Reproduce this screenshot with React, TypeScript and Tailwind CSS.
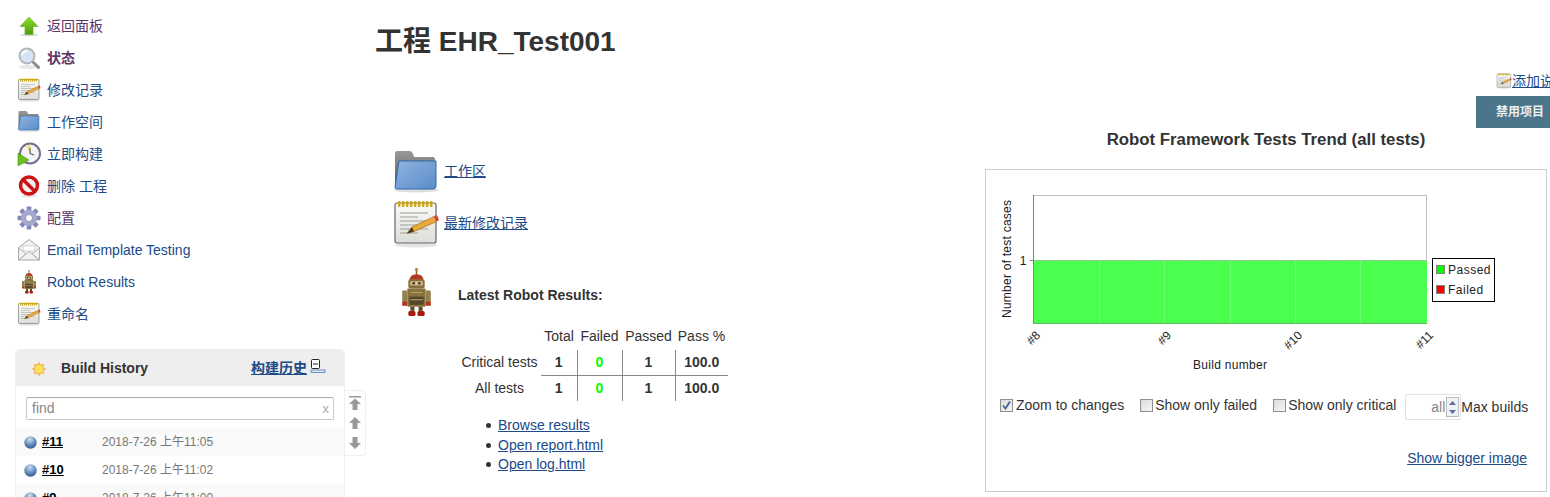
import { ReactNode } from "react";

const Arrow = () => (
  <svg width="24" height="24" viewBox="0 0 24 24">
    <defs>
      <linearGradient id="up" x1="0" y1="0" x2="0" y2="1">
        <stop offset="0" stopColor="#8ae234" />
        <stop offset="1" stopColor="#4e9a06" />
      </linearGradient>
    </defs>
    <ellipse cx="12" cy="21" rx="9" ry="1.500" fill="#ddd" />
    <path d="M12 3 L21 12.500 H16 V20.500 H8 V12.500 H3 Z" fill="url(#up)" stroke="#6aa81e" strokeWidth="0.600" />
  </svg>
);

const Magnifier = () => (
  <svg width="24" height="24" viewBox="0 0 24 24">
    <ellipse cx="11" cy="21" rx="9" ry="2" fill="#e8e8e8" />
    <path d="M15 15 L21.500 21.500" stroke="#8a8a8a" strokeWidth="3" strokeLinecap="round" />
    <circle cx="10" cy="10" r="7.500" fill="#d5e4f5" stroke="#b4b7b9" strokeWidth="2" />
    <path d="M5 9 A5 5 0 0 1 10 5" stroke="#fff" strokeWidth="2" fill="none" />
  </svg>
);

const Notepad = ({ size = 24 }: { size?: number }) => (
  <svg width={size} height={size} viewBox="0 0 48 48">
    <defs>
      <linearGradient id="paper" x1="0" y1="0" x2="0" y2="1">
        <stop offset="0" stopColor="#fbfbf8" />
        <stop offset="1" stopColor="#dcdcd8" />
      </linearGradient>
    </defs>
    <ellipse cx="24" cy="45" rx="21" ry="2.500" fill="#e4e4e4" />
    <rect x="3" y="3" width="41" height="40" rx="2" fill="url(#paper)" stroke="#666" strokeWidth="1.200" />
    {[6, 10, 14, 18, 22, 26, 30, 34, 38].map((x) => (
      <rect key={x} x={x} y="1" width="2.500" height="6" rx="1" fill="#c9a614" />
    ))}
    {[13, 17, 21, 25, 29, 33].map((y, i) => (
      <path key={y} d={`M8 ${y} H${i % 2 ? 26 : 36}`} stroke="#a5a5a5" strokeWidth="1.100" />
    ))}
    <path d="M15 33.500 L20 27 L42 16.500 L44.500 21.500 L22 31.500 Z" fill="#e9a93c" stroke="#a86f10" strokeWidth="0.700" />
    <path d="M42 16.500 L44.500 21.500 L47 20 L45 15 Z" fill="#d8403c" />
    <path d="M15 33.500 L20 27 L22 31.500 Z" fill="#4a3a22" />
  </svg>
);

const Folder = ({ size = 24 }: { size?: number }) => (
  <svg width={size} height={size} viewBox="0 0 48 48">
    <defs>
      <linearGradient id="fold" x1="0" y1="0" x2="1" y2="1">
        <stop offset="0" stopColor="#8fb4e0" />
        <stop offset="1" stopColor="#5a8cc9" />
      </linearGradient>
      <linearGradient id="back" x1="0" y1="0" x2="0" y2="1">
        <stop offset="0" stopColor="#9a9a9a" />
        <stop offset="1" stopColor="#555" />
      </linearGradient>
    </defs>
    <ellipse cx="24" cy="41" rx="22" ry="2.500" fill="#ddd" />
    <path d="M3 38 V4 Q3 2 5 2 H18 Q20 2 21 5 L22 8 H41 Q43 8 43 10 V38 Z" fill="url(#back)" />
    <path d="M7 12 H44 V37 Q44 40 41 40 H5 Q3 40 3 38 Z" fill="url(#fold)" stroke="#2f69ad" strokeWidth="1" />
  </svg>
);

const Clock = () => (
  <svg width="24" height="24" viewBox="0 0 24 24">
    <circle cx="13" cy="11.500" r="10" fill="#f4f3f6" stroke="#77708f" strokeWidth="2" />
    <path d="M13 11.500 L9 4 A8 8 0 0 1 14 3.500 Z" fill="#efe38c" />
    <path d="M13 11.500 L13 6 M13 11.500 L17 13" stroke="#444" strokeWidth="1" />
    <path d="M1 11 L12 18 L1 24 Z" fill="#6cc01c" stroke="#3c8c0c" strokeWidth="0.500" />
  </svg>
);

const NoEntry = () => (
  <svg width="24" height="24" viewBox="0 0 24 24">
    <ellipse cx="12" cy="22" rx="8" ry="1.500" fill="#e2e2e2" />
    <circle cx="12" cy="11.500" r="8.500" fill="#f4f0f0" stroke="#cc1414" strokeWidth="3.500" />
    <path d="M5.500 5 L18.500 18" stroke="#cc1414" strokeWidth="3.500" />
  </svg>
);

const Gear = () => (
  <svg width="24" height="24" viewBox="0 0 24 24">
    {[0, 45, 90, 135, 180, 225, 270, 315].map((a) => (
      <rect key={a} x="9.700" y="0.500" width="4.600" height="6" rx="0.800" fill="#8488b8" transform={`rotate(${a} 12 12)`} />
    ))}
    <circle cx="12" cy="12" r="8" fill="#a5a9cc" />
    <circle cx="12" cy="12" r="3.500" fill="#fff" stroke="#6d7099" strokeWidth="0.600" />
  </svg>
);

const Mail = () => (
  <svg width="24" height="24" viewBox="0 0 24 24">
    <path d="M1.500 9.500 L12 1.500 L22.500 9.500 V22 H1.500 Z" fill="#f2f2f0" stroke="#a7a7a3" strokeWidth="1" />
    <path d="M5.500 8 H18.500 L17 13 H7 Z" fill="#fff" stroke="#bbb" strokeWidth="0.600" />
    <path d="M1.500 10 L9 16 L1.500 22 M22.500 10 L15 16 L22.500 22 M2 22 L12 13.500 L22 22" fill="none" stroke="#b5b5b1" strokeWidth="1" />
  </svg>
);

const Robot = ({ w = 24, h = 24 }: { w?: number; h?: number }) => (
  <svg width={w} height={h} viewBox="0 0 30 48">
    <path d="M15 0 V7" stroke="#8a6a2f" strokeWidth="1.500" />
    <circle cx="15" cy="1.500" r="1.500" fill="#b08a3a" />
    <path d="M8 13 Q8 6 15 6 Q22 6 22 13 Z" fill="#b5391b" />
    <rect x="7" y="11" width="16" height="9" rx="2" fill="#8a6f3c" />
    <rect x="9" y="13" width="12" height="4" fill="#cfc39a" />
    <rect x="11" y="14" width="2.500" height="2" fill="#3a2c14" />
    <rect x="16.500" y="14" width="2.500" height="2" fill="#3a2c14" />
    <rect x="6" y="20" width="18" height="18" rx="1" fill="#86733f" />
    <rect x="8" y="28" width="14" height="8" fill="#54482a" />
    <path d="M9 24 H21 M9 31 H21" stroke="#b8a66c" strokeWidth="1" />
    <rect x="1" y="22" width="5" height="12" rx="1" fill="#94804c" />
    <rect x="24" y="22" width="5" height="12" rx="1" fill="#94804c" />
    <rect x="1" y="33" width="5" height="4" fill="#b5341c" />
    <rect x="24" y="33" width="5" height="4" fill="#b5341c" />
    <rect x="9" y="38" width="4" height="4" fill="#5a4a28" />
    <rect x="17" y="38" width="4" height="4" fill="#5a4a28" />
    <rect x="7" y="42" width="7" height="5" rx="1.500" fill="#a81c10" />
    <rect x="16" y="42" width="7" height="5" rx="1.500" fill="#a81c10" />
  </svg>
);

const Sun = () => (
  <svg width="16" height="16" viewBox="0 0 16 16">
    {[0, 45, 90, 135, 180, 225, 270, 315].map((a) => (
      <path key={a} d="M8 0.500 L10 4 H6 Z" fill="#f3b765" transform={`rotate(${a} 8 8)`} />
    ))}
    <circle cx="8" cy="8" r="4.500" fill="#fbe35c" stroke="#f1b04a" strokeWidth="0.800" />
  </svg>
);

const Ball = () => (
  <svg width="13" height="13" viewBox="0 0 13 13" className="shrink-0">
    <defs>
      <radialGradient id="ball" cx="0.450" cy="0.250" r="0.800">
        <stop offset="0" stopColor="#cfdff0" />
        <stop offset="0.500" stopColor="#6d94c4" />
        <stop offset="1" stopColor="#28508c" />
      </radialGradient>
    </defs>
    <circle cx="6.500" cy="6.500" r="6.200" fill="url(#ball)" />
  </svg>
);

const tasks: { icon: ReactNode; label: string; cls: string }[] = [
  { icon: <Arrow />, label: "返回面板", cls: "text-[#5c3566]" },
  { icon: <Magnifier />, label: "状态", cls: "text-[#5c3566] font-bold" },
  { icon: <Notepad />, label: "修改记录", cls: "" },
  { icon: <Folder />, label: "工作空间", cls: "" },
  { icon: <Clock />, label: "立即构建", cls: "" },
  { icon: <NoEntry />, label: "删除 工程", cls: "" },
  { icon: <Gear />, label: "配置", cls: "text-[#5c3566]" },
  { icon: <Mail />, label: "Email Template Testing", cls: "" },
  { icon: <Robot />, label: "Robot Results", cls: "" },
  { icon: <Notepad />, label: "重命名", cls: "" },
];

const builds = [
  { id: "#11", time: "2018-7-26 上午11:05", bg: "bg-[#fafafa]" },
  { id: "#10", time: "2018-7-26 上午11:02", bg: "bg-white" },
  { id: "#9", time: "2018-7-26 上午11:00", bg: "bg-[#fafafa]" },
];

const links = ["Browse results", "Open report.html", "Open log.html"];

const Check = ({ on = false }: { on?: boolean }) => (
  <span className="flex h-[13px] w-[13px] shrink-0 items-center justify-center border border-[#8e8f8f] bg-gradient-to-br from-[#dcdcdc] to-[#f6f6f6]">
    {on && (
      <svg width="11" height="11" viewBox="0 0 11 11">
        <path d="M2 5.500 L4.500 8.500 L9 1.500" fill="none" stroke="#4a5f97" strokeWidth="1.800" />
      </svg>
    )}
  </span>
);

const Chart = () => (
  <svg width="560" height="215" viewBox="986 170 560 215" className="block font-['Liberation_Sans',sans-serif]">
    <rect x="1033.500" y="195.500" width="393" height="128" fill="#fff" stroke="#c0c0c0" />
    <rect x="1033" y="260" width="394" height="63.500" fill="#4bff4f" />
    <path d="M1033 260.500 H1427" stroke="#b8b8b8" strokeDasharray="2 1" />
    {[1099, 1164, 1230, 1295, 1360].map((x) => (
      <path key={x} d={`M${x}.5 261 V323`} stroke="#6cff70" />
    ))}
    <path d="M1033.500 195 V324" stroke="#808080" />
    <path d="M1033 323.500 H1427" stroke="#5cb85c" />
    <path d="M1030 260.500 H1033" stroke="#808080" />
    <text x="1023" y="265" fontSize="12" fill="#222" textAnchor="middle">1</text>
    <text transform="translate(1011 318) rotate(-90)" fontSize="12" fill="#222" textLength="118">Number of test cases</text>
    {[
      { x: 1041, t: "#8" },
      { x: 1172, t: "#9" },
      { x: 1303, t: "#10" },
      { x: 1434, t: "#11" },
    ].map((l) => (
      <text key={l.t} transform={`translate(${l.x} 336) rotate(-45)`} fontSize="12" fill="#222" textAnchor="end">
        {l.t}
      </text>
    ))}
    <text x="1193" y="369" fontSize="12" fill="#222" textLength="74">Build number</text>
    <rect x="1432.500" y="258.500" width="62" height="43" fill="#fff" stroke="#000" />
    <rect x="1436.500" y="265.500" width="8" height="8" fill="#00ff00" stroke="#808080" />
    <rect x="1436.500" y="285.500" width="8" height="8" fill="#ff0000" stroke="#808080" />
    <text x="1448" y="274" fontSize="12" fill="#222" letterSpacing="0.500">Passed</text>
    <text x="1448" y="294" fontSize="12" fill="#222" letterSpacing="0.500">Failed</text>
  </svg>
);

export default function App() {
  return (
    <div className="flex h-[497px] w-[1550px] overflow-hidden bg-white font-['Liberation_Sans','Noto_Sans_CJK_SC',sans-serif] text-[14px] text-[#333]">
      {/* sidebar */}
      <aside className="w-[375px] shrink-0 pt-[10px]">
        <div className="pl-[17px]">
          {tasks.map((t) => (
            <div key={t.label} className="flex h-8 items-center gap-[6px]">
              <span className="flex h-6 w-6 items-center justify-center">{t.icon}</span>
              <span className={t.cls || "text-[#204a87]"}>{t.label}</span>
            </div>
          ))}
        </div>

        <div className="mt-[19px] flex pl-[15px]">
          <div className="w-[330px] shrink-0 rounded-t-[5px] border-x border-[#f0f0f0]">
            <div className="flex h-[37px] items-center rounded-t-[5px] bg-[#eee] pl-[15px] pr-[18px] pt-[2px]">
              <Sun />
              <span className="ml-[14px] font-bold text-[#333]">Build History</span>
              <span className="ml-auto font-bold text-[#204a87] underline">构建历史</span>
              <svg width="16" height="16" viewBox="0 0 16 16" className="mb-[5px] ml-[3px]">
                <rect x="1.500" y="1.500" width="8" height="9" rx="1" fill="#fff" stroke="#222" />
                <path d="M3 6 H8" stroke="#222" />
                <rect x="1" y="12" width="14" height="2.500" fill="#dde6f2" stroke="#3a6fb0" strokeWidth="0.700" />
              </svg>
            </div>
            <div className="px-[10px] pb-2 pt-[11px]">
              <div className="flex h-[23px] items-center justify-between rounded-[2px] border border-[#c8c8d0] border-t-[#aaa] pl-[5px] pr-[4px] text-[#888]">
                <span>find</span>
                <span className="text-[13px] text-[#aaa]">x</span>
              </div>
            </div>
            {builds.map((b) => (
              <div key={b.id} className={`flex h-7 items-center pl-[8px] ${b.bg}`}>
                <Ball />
                <span className="ml-[5px] w-[60px] text-[13px] font-bold text-black underline">{b.id}</span>
                <span className="mb-[1px] text-[12px] text-[#777]">{b.time}</span>
              </div>
            ))}
          </div>
          <div className="mt-[41px] flex h-[66px] w-[21px] flex-col items-center gap-[7px] rounded-r-[4px] border border-l-0 border-[#eee] pt-[5px]">
            <svg width="12" height="14" viewBox="0 0 12 14" className="shrink-0">
              <path d="M0 0 H12 V1.500 H0 Z M6 2.500 L12 8 H8.500 V14 H3.500 V8 H0 Z" fill="#999" />
            </svg>
            <svg width="12" height="12" viewBox="0 0 12 12" className="shrink-0">
              <path d="M6 0 L12 6 H8.500 V12 H3.500 V6 H0 Z" fill="#999" />
            </svg>
            <svg width="12" height="12" viewBox="0 0 12 12" className="mt-[1px] shrink-0">
              <path d="M6 12 L12 6 H8.500 V0 H3.500 V6 H0 Z" fill="#999" />
            </svg>
          </div>
        </div>
      </aside>

      {/* main */}
      <main className="flex min-w-0 flex-1 flex-col">
        <h1 className="pt-[23px] text-[28px] font-bold leading-[38px] text-[#333]">工程 EHR_Test001</h1>
        <div className="flex flex-1">
          <div className="w-[610px] shrink-0 pl-[17px] pt-[88px]">
            <div className="flex h-[48px] items-center gap-[4px]">
              <Folder size={48} />
              <span className="mb-[4px] text-[#204a87] underline">工作区</span>
            </div>
            <div className="mt-[3px] flex h-[48px] items-center gap-[4px]">
              <Notepad size={48} />
              <span className="mb-[2px] text-[#204a87] underline">最新修改记录</span>
            </div>
            <div className="mt-[20px] flex items-center pl-[9px]">
              <Robot w={31} h={49} />
              <span className="ml-[26px] mt-[5px] font-bold">Latest Robot Results:</span>
            </div>
            <table className="ml-[66px] mt-[6px] border-collapse text-center">
              <thead>
                <tr className="h-[27px]">
                  <th className="w-[83px] font-normal" />
                  <th className="w-[36px] font-normal">Total</th>
                  <th className="w-[45px] font-normal">Failed</th>
                  <th className="w-[53px] font-normal">Passed</th>
                  <th className="w-[53px] font-normal">Pass %</th>
                </tr>
              </thead>
              <tbody>
                <tr className="h-[25px]">
                  <td>Critical tests</td>
                  <td className="border-b border-r border-[#888] font-bold">1</td>
                  <td className="border-b border-r border-[#888] font-bold text-[#00ff00]">0</td>
                  <td className="border-b border-r border-[#888] font-bold">1</td>
                  <td className="border-b border-[#888] font-bold">100.0</td>
                </tr>
                <tr className="h-[26px]">
                  <td>All tests</td>
                  <td className="border-r border-[#888] font-bold">1</td>
                  <td className="border-r border-[#888] font-bold text-[#00ff00]">0</td>
                  <td className="border-r border-[#888] font-bold">1</td>
                  <td className="font-bold">100.0</td>
                </tr>
              </tbody>
            </table>
            <ul className="ml-[94px] mt-[15px] leading-[19.500px]">
              {links.map((l) => (
                <li key={l} className="flex items-center">
                  <span className="mr-[7px] h-[5px] w-[5px] rounded-full bg-[#333]" />
                  <span className="text-[#204a87] underline">{l}</span>
                </li>
              ))}
            </ul>
          </div>

          <div className="ml-auto mr-[3px] w-[562px] shrink-0">
            <div className="-mr-[21px] mt-[11px] flex h-[18px] items-center justify-end">
              <Notepad size={16} />
              <span className="text-[#204a87] underline">添加说明</span>
            </div>
            <div className="-mr-[20px] mt-[6px] flex justify-end">
              <div className="flex h-[32px] w-[91px] items-center border border-[#4b758b] bg-[#4b758b] pl-[19px] text-[12px] font-bold text-[#eee]">
                禁用项目
              </div>
            </div>
            <div className="mt-[1px] text-center text-[16.800px] font-bold leading-[21px]">Robot Framework Tests Trend (all tests)</div>
            <div className="mt-[19px] h-[323px] w-[562px] border border-[#ccc]">
              <Chart />
              <div className="ml-[14px] mt-[9px] flex items-center">
                <div className="mb-[4px] flex items-center">
                  <Check on />
                  <span className="ml-[3px]">Zoom to changes</span>
                  <span className="ml-[16px]"><Check /></span>
                  <span className="ml-[2px]">Show only failed</span>
                  <span className="ml-[16px]"><Check /></span>
                  <span className="ml-[2px]">Show only critical</span>
                </div>
                <div className="ml-[9px] flex h-[26px] w-[56px] items-center justify-end rounded-[2px] border border-[#dfe1ea] pr-[1px] text-[#888]">
                  <span>all</span>
                  <span className="ml-[1px] flex h-[20px] w-[13px] flex-col items-center justify-around border border-[#bbb] bg-[#eef1f6] text-[#5d6f96]">
                    <svg width="7" height="4" viewBox="0 0 7 4"><path d="M3.500 0 L7 4 H0 Z" fill="currentColor" /></svg>
                    <svg width="7" height="4" viewBox="0 0 7 4"><path d="M3.500 4 L7 0 H0 Z" fill="currentColor" /></svg>
                  </span>
                </div>
                <span>Max builds</span>
              </div>
              <div className="mr-[19px] mt-[28px] text-right text-[#204a87] underline">Show bigger image</div>
            </div>
          </div>
        </div>
      </main>
    </div>
  );
}
